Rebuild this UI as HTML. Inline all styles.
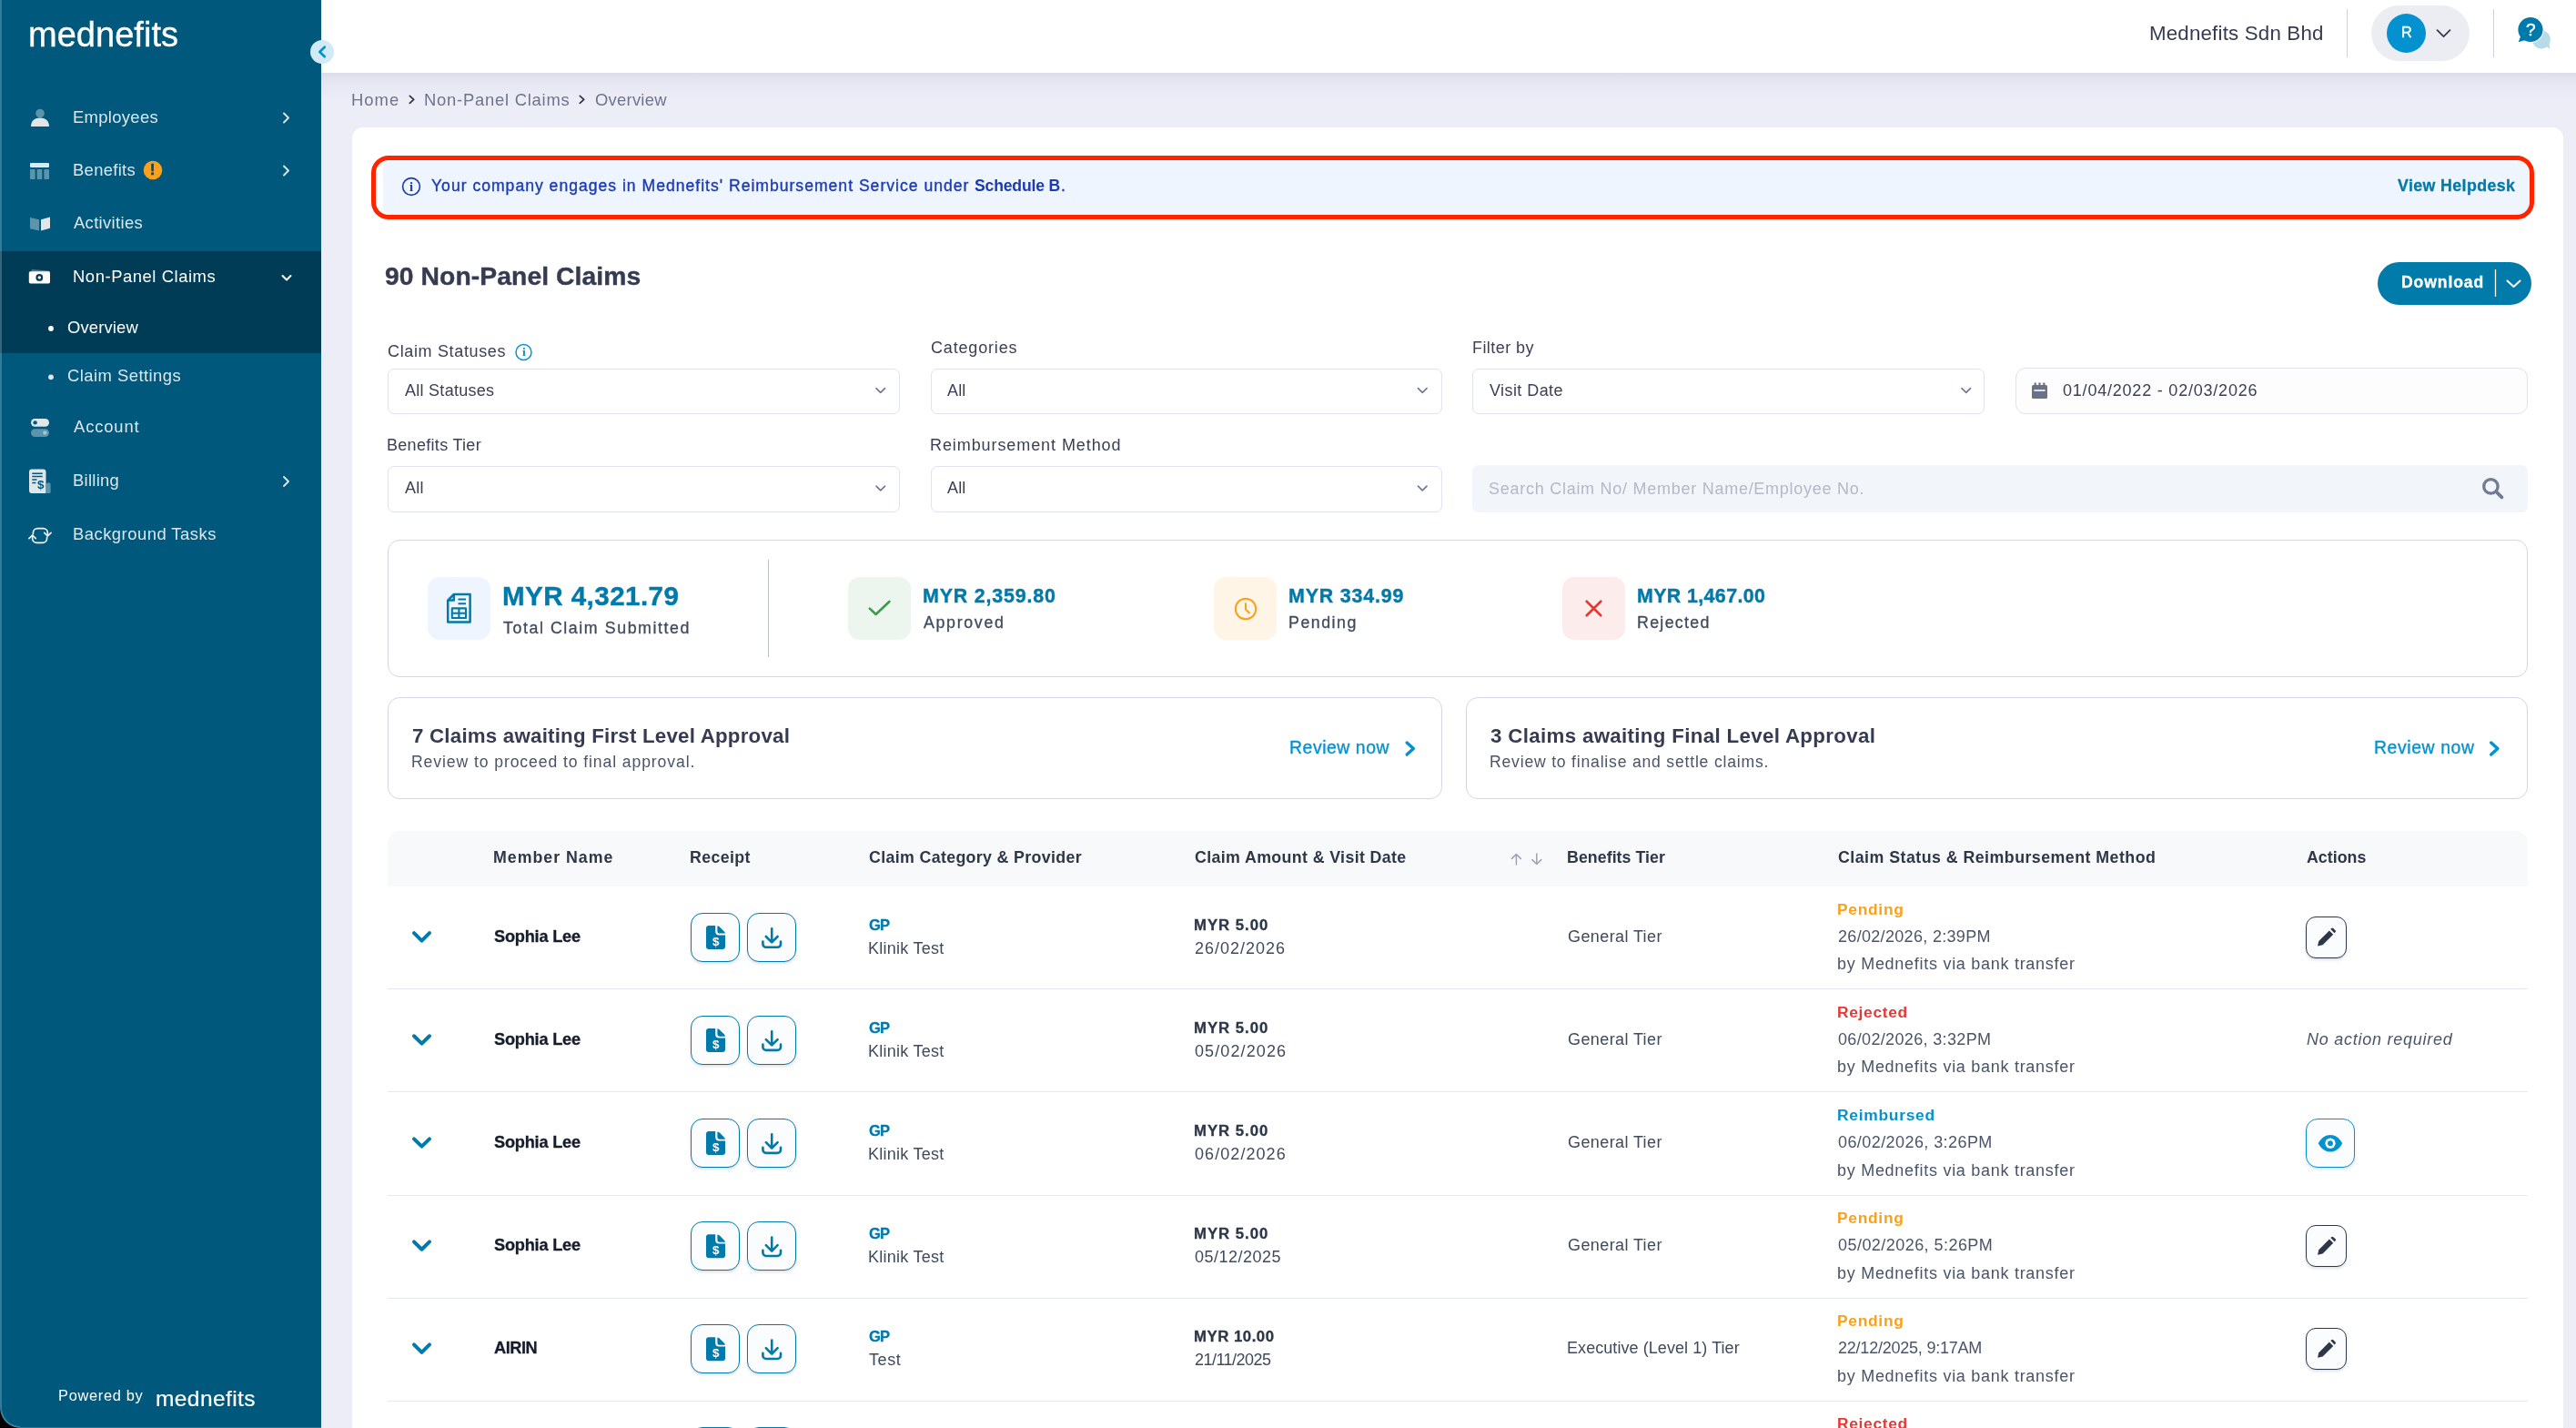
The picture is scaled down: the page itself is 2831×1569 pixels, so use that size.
<!DOCTYPE html>
<html lang="en"><head><meta charset="utf-8"><title>Non-Panel Claims - Overview</title>
<style>
*{box-sizing:border-box;margin:0;padding:0}
html,body{width:2831px;height:1569px;overflow:hidden}
body{position:relative;background:#ecedf7;font-family:"Liberation Sans",sans-serif;}
.t{position:absolute;white-space:nowrap;line-height:1;font-family:"Liberation Sans",sans-serif;will-change:transform}
.abs{position:absolute}
svg.ov{position:absolute;left:0;top:0;width:2831px;height:1569px;overflow:visible;pointer-events:none}
aside{position:absolute;left:0;top:0;width:353px;height:1569px;background:#00587c;}
aside .active{position:absolute;left:0;top:276px;width:353px;height:111.5px;background:#003c55}
aside .edge{position:absolute;left:0;top:0;width:2px;height:1569px;background:rgba(255,255,255,.21)}
header{position:absolute;left:0;top:0;width:2831px;height:80px;background:#fff}
.hshadow{position:absolute;left:353px;top:80px;width:2478px;height:30px;background:linear-gradient(#dcdde9,#e6e7f2 40%,#ecedf7)}
.vdiv{position:absolute;top:10px;width:1px;height:52.5px;background:#cfd1e0}
.pill{position:absolute;left:2606px;top:6px;width:108px;height:61px;border-radius:31px;background:#ecedf2}
.avatar{position:absolute;left:2623px;top:15px;width:43px;height:43px;border-radius:50%;background:#0392cf}
main{position:absolute;left:387px;top:139.5px;width:2430px;height:1440px;background:#fff;border-radius:12px}
.hl{position:absolute;left:407.5px;top:170.5px;width:2377.5px;height:70px;border:5px solid #ff2400;border-radius:19px;}
.alert{position:absolute;left:421px;top:176px;width:2360px;height:59.5px;background:#eef5ff;border-radius:9px 14px 14px 9px}
.btn-dl{position:absolute;left:2613px;top:288px;width:169px;height:46.5px;border-radius:24px;background:#007baa}
.sel{position:absolute;height:49.5px;border:1.2px solid #e0e2ef;border-radius:7px;background:#fff}
.date{position:absolute;left:2215px;top:404px;width:563px;height:51px;border:1.2px solid #e0e2ef;border-radius:11px;background:#fdfdfe}
.search{position:absolute;left:1618px;top:511px;width:1160px;height:51.5px;border-radius:7px;background:#f2f5f9}
.box{position:absolute;border:1.2px solid #d4d6e6;border-radius:13px;background:#fff}
.ib{position:absolute;top:634px;width:69px;height:69px;border-radius:13px}
.sdiv{position:absolute;left:844px;top:615px;width:1.3px;height:107px;background:#b9bdcb}
.thead{position:absolute;left:426px;top:913px;width:2352px;height:61px;background:#f8f9fb;border-radius:13px 13px 0 0}
.rline{position:absolute;left:426px;width:2352px;height:1px;background:#e6e8f1}
.rb{position:absolute;width:53.5px;height:53.5px;border:1.6px solid #0079ab;border-radius:13px;background:#fafcfe;box-shadow:0 2px 3px rgba(30,50,80,.14)}
.eb{position:absolute;left:2534px;width:44.75px;height:46px;border:1.6px solid #2d3748;border-radius:11px;background:#fbfcfe;box-shadow:0 2px 3px rgba(30,50,80,.14)}
.yb{position:absolute;left:2534px;width:53.5px;height:53.5px;border:1.6px solid #0392cf;border-radius:13px;background:#fafcfe;box-shadow:0 2px 3px rgba(30,50,80,.14)}
.gl{position:absolute;line-height:1;white-space:nowrap;font-weight:700;will-change:transform}
</style></head><body>
<div class="hshadow"></div>
<header>
<div class="vdiv" style="left:2579px"></div><div class="pill"></div><div class="avatar"></div><div class="vdiv" style="left:2740px"></div>
<span class="t" style="left:2362.00px;top:26.00px;font-size:22.3px;color:#363b52;letter-spacing:0.187px;">Mednefits Sdn Bhd</span>
<span class="t" style="left:2639.00px;top:27.00px;font-size:16.3px;color:#ffffff;-webkit-text-stroke:0.4px currentColor;">R</span>
</header>
<aside>
<div class="active"></div><div class="edge"></div>
<svg class="ov"><circle cx="44" cy="124.6" r="4.8" fill="rgba(255,255,255,.36)"/><path d="M34 139c0-7 4.5-9.6 10-9.6s10 2.6 10 9.6z" fill="#dfe7eb"/><polyline points="312,124.5 317,129.5 312,134.5" fill="none" stroke="#dbe7ed" stroke-width="1.9" stroke-linecap="round" stroke-linejoin="round"/><rect x="33" y="179" width="21" height="5" rx="1" fill="#dfe7eb"/><rect x="33" y="186" width="5.6" height="11" rx=".8" fill="rgba(255,255,255,.36)"/><rect x="40.7" y="186" width="5.6" height="11" rx=".8" fill="rgba(255,255,255,.36)"/><rect x="48.4" y="186" width="5.6" height="11" rx=".8" fill="rgba(255,255,255,.36)"/><polyline points="312,182.5 317,187.5 312,192.5" fill="none" stroke="#dbe7ed" stroke-width="1.9" stroke-linecap="round" stroke-linejoin="round"/><path d="M33 239l10 2.2v12.3l-10-2.2z" fill="rgba(255,255,255,.36)"/><path d="M45 241.2l10-2.7v12.3l-10 2.7z" fill="#dfe7eb"/><rect x="34" y="296.600" width="20.500" height="13" rx="1.500" fill="rgba(255,255,255,.3)" transform="rotate(5 44 303)"/><rect x="31.8" y="298.2" width="23.2" height="13.2" rx="1.6" fill="#fff"/><circle cx="43.3" cy="304.9" r="3.9" fill="#003c55"/><circle cx="43.3" cy="304.9" r="1.7" fill="#fff"/><polyline points="310.5,303 315,307.5 319.5,303" fill="none" stroke="#fff" stroke-width="2" stroke-linecap="round" stroke-linejoin="round"/><circle cx="56" cy="361" r="2.9" fill="#fff"/><circle cx="56" cy="414.3" r="2.9" fill="#dbe7ed"/><rect x="34" y="460" width="20" height="8.7" rx="4.35" fill="#dfe7eb"/><circle cx="38.6" cy="464.35" r="2.2" fill="#00587c"/><rect x="34" y="471.2" width="20" height="8.7" rx="4.35" fill="rgba(255,255,255,.36)"/><circle cx="49.4" cy="475.55" r="2.2" fill="rgba(255,255,255,.45)"/><rect x="51" y="530.5" width="4.6" height="11.5" rx="1.5" fill="rgba(255,255,255,.36)"/><path d="M35 515.5h12.5a3 3 0 0 1 3 3V542H35a3 3 0 0 1-3-3v-20.5a3 3 0 0 1 3-3z" fill="#dfe7eb"/><path d="M35.3 520.3h11.4M35.3 523.6h11.4M35.3 527h5.2M35.3 530.4h4" stroke="#00587c" stroke-width="1.5"/><g fill="none" stroke="#eef3f6" stroke-width="1.7" stroke-linecap="round" stroke-linejoin="round"><path d="M36.4 586.6v-1.200a4.800 4.800 0 0 1 4.800-4.800h6.400a4.800 4.800 0 0 1 4.800 4.800v3.200"/><path d="M48.700 585.300l3.700 3.700 3.700-3.700"/><path d="M51.600 590.400v1.200a4.800 4.800 0 0 1-4.800 4.800h-6.400a4.800 4.800 0 0 1-4.800-4.800v-3.200"/><path d="M39.300 591.700l-3.700-3.700-3.700 3.700"/></g><polyline points="312,524 317,529 312,534" fill="none" stroke="#dbe7ed" stroke-width="1.9" stroke-linecap="round" stroke-linejoin="round"/><circle cx="168" cy="187" r="10.3" fill="#f9a11b"/></svg>
<nav>
<span class="t" style="left:31.00px;top:19.00px;font-size:38px;color:#ffffff;letter-spacing:0.032px;-webkit-text-stroke:0.35px currentColor;">mednefits</span>
<span class="t" style="left:79.50px;top:120.00px;font-size:18.4px;color:#dbe7ed;letter-spacing:0.340px;">Employees</span>
<span class="t" style="left:79.50px;top:178.00px;font-size:18.4px;color:#dbe7ed;letter-spacing:0.321px;">Benefits</span>
<span class="t" style="left:80.50px;top:236.00px;font-size:18.4px;color:#dbe7ed;letter-spacing:0.349px;">Activities</span>
<span class="t" style="left:79.50px;top:295.00px;font-size:18.4px;color:#ffffff;letter-spacing:0.566px;">Non-Panel Claims</span>
<span class="t" style="left:73.50px;top:351.00px;font-size:18.4px;color:#ffffff;letter-spacing:0.163px;">Overview</span>
<span class="t" style="left:73.50px;top:404.00px;font-size:18.4px;color:#dbe7ed;letter-spacing:0.472px;">Claim Settings</span>
<span class="t" style="left:80.50px;top:460.00px;font-size:18.4px;color:#dbe7ed;letter-spacing:0.860px;">Account</span>
<span class="t" style="left:79.50px;top:519.00px;font-size:18.4px;color:#dbe7ed;letter-spacing:0.277px;">Billing</span>
<span class="t" style="left:79.50px;top:578.00px;font-size:18.4px;color:#dbe7ed;letter-spacing:0.495px;">Background Tasks</span>
<span class="t" style="left:64.00px;top:1525.00px;font-size:16.4px;color:#ffffff;letter-spacing:0.693px;">Powered by</span>
<span class="t" style="left:170.70px;top:1525.00px;font-size:24.5px;color:#ffffff;letter-spacing:0.416px;-webkit-text-stroke:0.2px currentColor;">mednefits</span>
<span class="gl" style="left:165.3px;top:179.4px;font-size:16px;color:#1d4257;-webkit-text-stroke:.6px #1d4257">!</span>
<span class="gl" style="left:40.6px;top:525.6px;font-size:13.5px;color:#00587c">$</span>
</nav>
</aside>
<nav class="crumb"><span class="t" style="left:386.00px;top:101.00px;font-size:18.4px;color:#6e7489;letter-spacing:1.057px;">Home</span>
<span class="t" style="left:465.50px;top:101.00px;font-size:18.4px;color:#6e7489;letter-spacing:0.766px;">Non-Panel Claims</span>
<span class="t" style="left:653.80px;top:101.00px;font-size:18.4px;color:#6e7489;letter-spacing:0.263px;">Overview</span></nav>
<main></main>
<section class="content">
<div class="alert"></div><div class="hl"></div>
<span class="t" style="left:474.00px;top:196.00px;font-size:17.6px;color:#1b3bb5;letter-spacing:0.992px;-webkit-text-stroke:0.35px currentColor;">Your company engages in Mednefits' Reimbursement Service under</span>
<span class="t" style="left:1070.50px;top:196.00px;font-size:17.6px;color:#1b3bb5;letter-spacing:-0.178px;font-weight:700;">Schedule B</span>
<span class="t" style="left:1165.50px;top:196.00px;font-size:17.6px;color:#1b3bb5;-webkit-text-stroke:0.35px currentColor;">.</span>
<span class="t" style="left:2635.00px;top:196.00px;font-size:17.8px;color:#0079ab;letter-spacing:0.391px;font-weight:700;-webkit-text-stroke:0.3px currentColor;">View Helpdesk</span>
<div class="btn-dl"></div>
<span class="t" style="left:422.50px;top:289.00px;font-size:28.3px;color:#363b52;letter-spacing:0.073px;font-weight:700;-webkit-text-stroke:0.4px currentColor;">90 Non-Panel Claims</span>
<span class="t" style="left:2638.50px;top:302.00px;font-size:17.6px;color:#ffffff;letter-spacing:0.885px;font-weight:700;-webkit-text-stroke:0.3px currentColor;">Download</span>
<div class="sel" style="left:426px;top:405px;width:563px;height:49.5px"></div><div class="sel" style="left:1022.5px;top:405px;width:562px;height:49.5px"></div><div class="sel" style="left:1618px;top:405px;width:563px;height:49.5px"></div><div class="date"></div>
<div class="sel" style="left:426px;top:512px;width:563px;height:51px"></div><div class="sel" style="left:1022.5px;top:512px;width:562px;height:51px"></div><div class="search"></div>
<span class="t" style="left:426.00px;top:377.00px;font-size:18px;color:#3a3f55;letter-spacing:0.651px;">Claim Statuses</span>
<span class="t" style="left:1022.50px;top:373.00px;font-size:18px;color:#3a3f55;letter-spacing:0.828px;">Categories</span>
<span class="t" style="left:1617.50px;top:373.00px;font-size:18px;color:#3a3f55;letter-spacing:0.436px;">Filter by</span>
<span class="t" style="left:425.00px;top:480.00px;font-size:18px;color:#3a3f55;letter-spacing:0.302px;">Benefits Tier</span>
<span class="t" style="left:1021.50px;top:480.00px;font-size:18px;color:#3a3f55;letter-spacing:0.917px;">Reimbursement Method</span>
<span class="t" style="left:444.50px;top:420.00px;font-size:18px;color:#3a3f55;letter-spacing:0.269px;">All Statuses</span>
<span class="t" style="left:1040.75px;top:420.00px;font-size:18px;color:#3a3f55;letter-spacing:0.123px;">All</span>
<span class="t" style="left:1637.00px;top:420.00px;font-size:18px;color:#3a3f55;letter-spacing:0.423px;">Visit Date</span>
<span class="t" style="left:2266.50px;top:420.00px;font-size:18px;color:#3a3f55;letter-spacing:0.788px;">01/04/2022 - 02/03/2026</span>
<span class="t" style="left:444.50px;top:527.00px;font-size:18px;color:#3a3f55;letter-spacing:0.248px;">All</span>
<span class="t" style="left:1040.75px;top:527.00px;font-size:18px;color:#3a3f55;letter-spacing:0.123px;">All</span>
<span class="t" style="left:1636.00px;top:528.00px;font-size:18px;color:#b4b8c9;letter-spacing:0.734px;">Search Claim No/ Member Name/Employee No.</span>
<div class="box" style="left:426px;top:593px;width:2352px;height:151px"></div>
<div class="ib" style="left:470px;background:#eef5fe"></div><div class="ib" style="left:932px;background:#edf6ee"></div><div class="ib" style="left:1334px;background:#fff5e6"></div><div class="ib" style="left:1717px;background:#fdecec"></div>
<div class="sdiv"></div>
<span class="t" style="left:552.00px;top:640.00px;font-size:29.6px;color:#0079ab;letter-spacing:0.434px;font-weight:700;-webkit-text-stroke:0.4px currentColor;">MYR 4,321.79</span>
<span class="t" style="left:553.00px;top:682.00px;font-size:17.8px;color:#3f4a5c;letter-spacing:1.572px;-webkit-text-stroke:0.3px currentColor;">Total Claim Submitted</span>
<span class="t" style="left:1014.00px;top:645.00px;font-size:21.4px;color:#0079ab;letter-spacing:0.832px;font-weight:700;-webkit-text-stroke:0.4px currentColor;">MYR 2,359.80</span>
<span class="t" style="left:1015.00px;top:676.00px;font-size:17.8px;color:#3f4a5c;letter-spacing:1.682px;-webkit-text-stroke:0.3px currentColor;">Approved</span>
<span class="t" style="left:1416.00px;top:645.00px;font-size:21.4px;color:#0079ab;letter-spacing:0.833px;font-weight:700;-webkit-text-stroke:0.4px currentColor;">MYR 334.99</span>
<span class="t" style="left:1416.00px;top:676.00px;font-size:17.8px;color:#3f4a5c;letter-spacing:1.522px;-webkit-text-stroke:0.3px currentColor;">Pending</span>
<span class="t" style="left:1798.50px;top:645.00px;font-size:21.4px;color:#0079ab;letter-spacing:0.378px;font-weight:700;-webkit-text-stroke:0.4px currentColor;">MYR 1,467.00</span>
<span class="t" style="left:1798.50px;top:676.00px;font-size:17.8px;color:#3f4a5c;letter-spacing:1.316px;-webkit-text-stroke:0.3px currentColor;">Rejected</span>
<div class="box" style="left:426px;top:766px;width:1158.5px;height:112px"></div>
<div class="box" style="left:1611px;top:766px;width:1167px;height:112px"></div>
<span class="t" style="left:453.00px;top:798.00px;font-size:22.3px;color:#363b52;letter-spacing:0.217px;font-weight:700;">7 Claims awaiting First Level Approval</span>
<span class="t" style="left:452.00px;top:829.00px;font-size:17.6px;color:#4a5468;letter-spacing:0.905px;">Review to proceed to final approval.</span>
<span class="t" style="left:1416.50px;top:812.00px;font-size:19.4px;color:#0392cf;letter-spacing:0.552px;-webkit-text-stroke:0.35px currentColor;">Review now</span>
<span class="t" style="left:1638.00px;top:798.00px;font-size:22.3px;color:#363b52;letter-spacing:0.333px;font-weight:700;">3 Claims awaiting Final Level Approval</span>
<span class="t" style="left:1637.00px;top:829.00px;font-size:17.6px;color:#4a5468;letter-spacing:0.797px;">Review to finalise and settle claims.</span>
<span class="t" style="left:2609.00px;top:812.00px;font-size:19.4px;color:#0392cf;letter-spacing:0.607px;-webkit-text-stroke:0.35px currentColor;">Review now</span>
<div class="thead"></div>
<span class="t" style="left:541.50px;top:934.00px;font-size:17.8px;color:#2d3748;letter-spacing:0.984px;font-weight:700;">Member Name</span>
<span class="t" style="left:758.00px;top:934.00px;font-size:17.8px;color:#2d3748;letter-spacing:0.365px;font-weight:700;">Receipt</span>
<span class="t" style="left:955.00px;top:934.00px;font-size:17.8px;color:#2d3748;letter-spacing:0.349px;font-weight:700;">Claim Category &amp; Provider</span>
<span class="t" style="left:1313.00px;top:934.00px;font-size:17.8px;color:#2d3748;letter-spacing:0.372px;font-weight:700;">Claim Amount &amp; Visit Date</span>
<span class="t" style="left:1722.00px;top:934.00px;font-size:17.8px;color:#2d3748;letter-spacing:0.045px;font-weight:700;">Benefits Tier</span>
<span class="t" style="left:2019.50px;top:934.00px;font-size:17.8px;color:#2d3748;letter-spacing:0.468px;font-weight:700;">Claim Status &amp; Reimbursement Method</span>
<span class="t" style="left:2534.50px;top:934.00px;font-size:17.8px;color:#2d3748;letter-spacing:0.031px;font-weight:700;">Actions</span>
<svg class="ov"><circle cx="354" cy="57" r="13" fill="#d2eaf6"/><polyline points="356.8,51.7 351.3,57 356.8,62.3" fill="none" stroke="#0392cf" stroke-width="2.6" stroke-linecap="round" stroke-linejoin="round"/><polyline points="450.3,105.4 454.7,109.4 450.3,113.4" fill="none" stroke="#2e3348" stroke-width="1.7" stroke-linecap="round" stroke-linejoin="round"/><polyline points="637.3,105.4 641.6999999999999,109.4 637.3,113.4" fill="none" stroke="#2e3348" stroke-width="1.7" stroke-linecap="round" stroke-linejoin="round"/><polyline points="2678.5,33.2 2685.5,40.2 2692.5,33.2" fill="none" stroke="#363b52" stroke-width="1.8" stroke-linecap="round" stroke-linejoin="round"/><path d="M2793 33.5a9.8 9.8 0 1 1-2.5 19.3l.2 0a9.8 9.8 0 0 1 2.3-19.3z" fill="#b8dbea"/><circle cx="2792.6" cy="43.6" r="9.9" fill="#b8dbea"/><path d="M2797 50l5.6 4-1.4-7z" fill="#b8dbea"/><circle cx="2781" cy="32.500" r="14.600" fill="#fff"/><circle cx="2781" cy="32.5" r="13.6" fill="#0079ab"/><path d="M2770.5 39l-2.8 7.2 8.6-2.4z" fill="#0079ab"/><circle cx="452" cy="205" r="9.4" fill="none" stroke="#1b3bb5" stroke-width="1.6"/><circle cx="575.5" cy="387" r="8.5" fill="none" stroke="#0392cf" stroke-width="1.5"/><line x1="2742.5" y1="296" x2="2742.5" y2="326" stroke="#fff" stroke-width="1.3"/><polyline points="2755.5,308.5 2762.5,315 2769.5,308.5" fill="none" stroke="#fff" stroke-width="2" stroke-linecap="round" stroke-linejoin="round"/><polyline points="962.95,426.6 967.75,431.4 972.55,426.6" fill="none" stroke="#6f768d" stroke-width="1.6" stroke-linecap="round" stroke-linejoin="round"/><polyline points="1558.45,426.6 1563.25,431.4 1568.05,426.6" fill="none" stroke="#6f768d" stroke-width="1.6" stroke-linecap="round" stroke-linejoin="round"/><polyline points="2155.95,426.6 2160.75,431.4 2165.55,426.6" fill="none" stroke="#6f768d" stroke-width="1.6" stroke-linecap="round" stroke-linejoin="round"/><polyline points="962.95,534.1 967.75,538.9 972.55,534.1" fill="none" stroke="#6f768d" stroke-width="1.6" stroke-linecap="round" stroke-linejoin="round"/><polyline points="1558.45,534.1 1563.25,538.9 1568.05,534.1" fill="none" stroke="#6f768d" stroke-width="1.6" stroke-linecap="round" stroke-linejoin="round"/><g fill="#6b7186"><rect x="2233" y="423" width="17" height="15" rx="1.6"/><rect x="2235.6" y="420.5" width="2.2" height="3.5"/><rect x="2240.4" y="420.5" width="2.2" height="3.5"/><rect x="2245.2" y="420.5" width="2.2" height="3.5"/></g><rect x="2235.4" y="428.2" width="12.2" height="1.6" fill="#fdfdfe"/><circle cx="2737.4" cy="534.4" r="7.7" fill="none" stroke="#737a94" stroke-width="3.3"/><line x1="2743.4" y1="540.4" x2="2749.4" y2="546.4" stroke="#737a94" stroke-width="3.8" stroke-linecap="round"/><g fill="none" stroke="#0079ab" stroke-width="2.5" stroke-linejoin="round"><path d="M498.8 653H516.6V683.6H492.2V659.6z"/><path d="M498.8 653v6.6h-6.6"/><path d="M503.5 658.6h8.5M503.5 663.2h8.5" stroke-width="2"/><rect x="496.8" y="668.4" width="15.2" height="10.6" stroke-width="2.1"/><path d="M504.4 668.4v10.6M496.8 673.7h15.2" stroke-width="2.1"/></g><polyline points="955.8,668.6 962.6,675 977.4,661" fill="none" stroke="#3d9a4c" stroke-width="2.6" stroke-linecap="round" stroke-linejoin="round"/><circle cx="1369" cy="669" r="11.2" fill="none" stroke="#f9a11b" stroke-width="2"/><path d="M1369 663.2V669.6L1373 673.4" fill="none" stroke="#f9a11b" stroke-width="2" stroke-linecap="round" stroke-linejoin="round"/><path d="M1743.7 660.7l15.6 15.6M1759.3 660.7l-15.6 15.6" stroke="#e53935" stroke-width="2.7" stroke-linecap="round"/><polyline points="1546.2,816 1553.4,822.5 1546.2,829" fill="none" stroke="#0392cf" stroke-width="3.4" stroke-linecap="round" stroke-linejoin="round"/><polyline points="2737.7,816 2744.8999999999996,822.5 2737.7,829" fill="none" stroke="#0392cf" stroke-width="3.4" stroke-linecap="round" stroke-linejoin="round"/><g fill="none" stroke="#9aa3b3" stroke-width="1.5" stroke-linecap="round" stroke-linejoin="round"><path d="M1666.4 950V938.5M1661.5 943.4l4.9-4.9 4.9 4.9"/><path d="M1688.8 938v11.5M1683.9 944.6l4.9 4.9 4.9-4.9"/></g></svg>
<span class="gl" style="left:2776.1px;top:22.8px;font-size:19px;color:#fff;font-weight:400;-webkit-text-stroke:.5px #fff">?</span>
<span class="gl" style="left:449.9px;top:197.6px;font-size:14.5px;color:#1b3bb5;font-family:'Liberation Serif',serif">i</span>
<span class="gl" style="left:573.6px;top:380.2px;font-size:13.5px;color:#0392cf;font-family:'Liberation Serif',serif">i</span>
<div class="row">
<div class="rb" style="left:759px;top:1003.0px"></div><div class="rb" style="left:821px;top:1003.0px"></div>
<div class="eb" style="top:1007.0px"></div>
<svg class="ov"><polyline points="455,1025.2 463.5,1033.6 472,1025.2" fill="none" stroke="#0079ab" stroke-width="4" stroke-linecap="round" stroke-linejoin="round"/><path d="M779 1017.0h7.2v6.4a4 4 0 0 0 4 4H797v12.6a3 3 0 0 1-3 3h-15a3 3 0 0 1-3-3v-20a3 3 0 0 1 3-3z" fill="#0079ab"/><path d="M788.4 1017.3c1.2.2 1.9.6 2.7 1.4l4.6 4.6c.8.8 1.2 1.5 1.3 2.3h-6a2.6 2.6 0 0 1-2.6-2.6z" fill="#0079ab"/><g fill="none" stroke="#0079ab" stroke-width="2.6" stroke-linecap="round" stroke-linejoin="round"><path d="M848.2 1020.3V1035.0M841.8 1029.0l6.4 6.4 6.4-6.4"/><path d="M838.4 1034.6v2.6a3.6 3.6 0 0 0 3.6 3.6h12.4a3.6 3.6 0 0 0 3.6-3.6v-2.6"/></g><path d="M2547 1039.6l1.3-5.6 11.6-11.6 4.3 4.3-11.6 11.6z" fill="#2d3748"/><path d="M2561.3 1020.9l.9-.9a1.5 1.5 0 0 1 2.1 0l2.2 2.2a1.5 1.5 0 0 1 0 2.1l-.9.9z" fill="#2d3748"/></svg>
<span class="gl" style="left:782.6px;top:1028.2px;font-size:13.5px;color:#fff">$</span>
<div class="rline" style="top:1086px"></div>
<span class="t" style="left:2018.50px;top:991.00px;font-size:17.4px;color:#f9a11b;letter-spacing:0.713px;font-weight:700;">Pending</span>
<span class="t" style="left:542.50px;top:1020.00px;font-size:18.2px;color:#151c2b;letter-spacing:-0.212px;font-weight:700;-webkit-text-stroke:0.3px currentColor;">Sophia Lee</span>
<span class="t" style="left:955.00px;top:1009.00px;font-size:16.6px;color:#0079ab;letter-spacing:-0.907px;font-weight:700;-webkit-text-stroke:0.3px currentColor;">GP</span>
<span class="t" style="left:954.00px;top:1033.00px;font-size:18px;color:#3f4a5c;letter-spacing:0.247px;">Klinik Test</span>
<span class="t" style="left:1312.00px;top:1009.00px;font-size:16.8px;color:#2d3748;letter-spacing:0.960px;font-weight:700;-webkit-text-stroke:0.3px currentColor;">MYR 5.00</span>
<span class="t" style="left:1313.00px;top:1033.00px;font-size:18px;color:#3f4a5c;letter-spacing:0.991px;">26/02/2026</span>
<span class="t" style="left:1723.00px;top:1020.00px;font-size:18px;color:#3f4a5c;letter-spacing:0.398px;">General Tier</span>
<span class="t" style="left:2019.50px;top:1020.00px;font-size:18px;color:#4a5468;letter-spacing:0.316px;">26/02/2026, 2:39PM</span>
<span class="t" style="left:2018.50px;top:1050.00px;font-size:18px;color:#4a5468;letter-spacing:0.720px;">by Mednefits via bank transfer</span>
</div><div class="row">
<div class="rb" style="left:759px;top:1116.05px"></div><div class="rb" style="left:821px;top:1116.05px"></div>
<svg class="ov"><polyline points="455,1138.25 463.5,1146.6499999999999 472,1138.25" fill="none" stroke="#0079ab" stroke-width="4" stroke-linecap="round" stroke-linejoin="round"/><path d="M779 1130.05h7.2v6.4a4 4 0 0 0 4 4H797v12.6a3 3 0 0 1-3 3h-15a3 3 0 0 1-3-3v-20a3 3 0 0 1 3-3z" fill="#0079ab"/><path d="M788.4 1130.35c1.2.2 1.9.6 2.7 1.4l4.6 4.6c.8.8 1.2 1.5 1.3 2.3h-6a2.6 2.6 0 0 1-2.6-2.6z" fill="#0079ab"/><g fill="none" stroke="#0079ab" stroke-width="2.6" stroke-linecap="round" stroke-linejoin="round"><path d="M848.2 1133.35V1148.05M841.8 1142.05l6.4 6.4 6.4-6.4"/><path d="M838.4 1147.6499999999999v2.6a3.6 3.6 0 0 0 3.6 3.6h12.4a3.6 3.6 0 0 0 3.6-3.6v-2.6"/></g></svg>
<span class="gl" style="left:782.6px;top:1141.25px;font-size:13.5px;color:#fff">$</span>
<div class="rline" style="top:1199px"></div>
<span class="t" style="left:2018.50px;top:1104.00px;font-size:17.4px;color:#e53935;letter-spacing:0.662px;font-weight:700;">Rejected</span>
<span class="t" style="left:542.50px;top:1133.00px;font-size:18.2px;color:#151c2b;letter-spacing:-0.212px;font-weight:700;-webkit-text-stroke:0.3px currentColor;">Sophia Lee</span>
<span class="t" style="left:955.00px;top:1122.00px;font-size:16.6px;color:#0079ab;letter-spacing:-0.907px;font-weight:700;-webkit-text-stroke:0.3px currentColor;">GP</span>
<span class="t" style="left:954.00px;top:1146.00px;font-size:18px;color:#3f4a5c;letter-spacing:0.247px;">Klinik Test</span>
<span class="t" style="left:1312.00px;top:1122.00px;font-size:16.8px;color:#2d3748;letter-spacing:0.960px;font-weight:700;-webkit-text-stroke:0.3px currentColor;">MYR 5.00</span>
<span class="t" style="left:1313.00px;top:1146.00px;font-size:18px;color:#3f4a5c;letter-spacing:1.103px;">05/02/2026</span>
<span class="t" style="left:1723.00px;top:1133.00px;font-size:18px;color:#3f4a5c;letter-spacing:0.398px;">General Tier</span>
<span class="t" style="left:2019.50px;top:1133.00px;font-size:18px;color:#4a5468;letter-spacing:0.345px;">06/02/2026, 3:32PM</span>
<span class="t" style="left:2018.50px;top:1163.00px;font-size:18px;color:#4a5468;letter-spacing:0.720px;">by Mednefits via bank transfer</span>
<span class="t" style="left:2535.00px;top:1133.00px;font-size:18px;color:#4a5468;letter-spacing:0.746px;font-style:italic;">No action required</span>
</div><div class="row">
<div class="rb" style="left:759px;top:1229.1px"></div><div class="rb" style="left:821px;top:1229.1px"></div>
<div class="yb" style="top:1229.1px"></div>
<svg class="ov"><polyline points="455,1251.3 463.5,1259.6999999999998 472,1251.3" fill="none" stroke="#0079ab" stroke-width="4" stroke-linecap="round" stroke-linejoin="round"/><path d="M779 1243.1h7.2v6.4a4 4 0 0 0 4 4H797v12.6a3 3 0 0 1-3 3h-15a3 3 0 0 1-3-3v-20a3 3 0 0 1 3-3z" fill="#0079ab"/><path d="M788.4 1243.3999999999999c1.2.2 1.9.6 2.7 1.4l4.6 4.6c.8.8 1.2 1.5 1.3 2.3h-6a2.6 2.6 0 0 1-2.6-2.6z" fill="#0079ab"/><g fill="none" stroke="#0079ab" stroke-width="2.6" stroke-linecap="round" stroke-linejoin="round"><path d="M848.2 1246.3999999999999V1261.1M841.8 1255.1l6.4 6.4 6.4-6.4"/><path d="M838.4 1260.6999999999998v2.6a3.6 3.6 0 0 0 3.6 3.6h12.4a3.6 3.6 0 0 0 3.6-3.6v-2.6"/></g><path d="M2547.8 1256.2c3.4-6.4 8-9.3 13.2-9.3s9.800 2.900 13.200 9.300c-3.400 6.400-8 9.300-13.200 9.300s-9.800-2.900-13.200-9.300z" fill="#0392cf"/><circle cx="2561" cy="1256.2" r="5.6" fill="#fff"/><circle cx="2561" cy="1256.2" r="2.9" fill="#0392cf"/></svg>
<span class="gl" style="left:782.6px;top:1254.3px;font-size:13.5px;color:#fff">$</span>
<div class="rline" style="top:1313px"></div>
<span class="t" style="left:2018.50px;top:1217.00px;font-size:17.4px;color:#0392cf;letter-spacing:0.735px;font-weight:700;">Reimbursed</span>
<span class="t" style="left:542.50px;top:1246.00px;font-size:18.2px;color:#151c2b;letter-spacing:-0.212px;font-weight:700;-webkit-text-stroke:0.3px currentColor;">Sophia Lee</span>
<span class="t" style="left:955.00px;top:1235.00px;font-size:16.6px;color:#0079ab;letter-spacing:-0.907px;font-weight:700;-webkit-text-stroke:0.3px currentColor;">GP</span>
<span class="t" style="left:954.00px;top:1259.00px;font-size:18px;color:#3f4a5c;letter-spacing:0.247px;">Klinik Test</span>
<span class="t" style="left:1312.00px;top:1235.00px;font-size:16.8px;color:#2d3748;letter-spacing:0.960px;font-weight:700;-webkit-text-stroke:0.3px currentColor;">MYR 5.00</span>
<span class="t" style="left:1313.00px;top:1259.00px;font-size:18px;color:#3f4a5c;letter-spacing:1.069px;">06/02/2026</span>
<span class="t" style="left:1723.00px;top:1246.00px;font-size:18px;color:#3f4a5c;letter-spacing:0.398px;">General Tier</span>
<span class="t" style="left:2019.50px;top:1246.00px;font-size:18px;color:#4a5468;letter-spacing:0.422px;">06/02/2026, 3:26PM</span>
<span class="t" style="left:2018.50px;top:1277.00px;font-size:18px;color:#4a5468;letter-spacing:0.720px;">by Mednefits via bank transfer</span>
</div><div class="row">
<div class="rb" style="left:759px;top:1342.15px"></div><div class="rb" style="left:821px;top:1342.15px"></div>
<div class="eb" style="top:1346.15px"></div>
<svg class="ov"><polyline points="455,1364.35 463.5,1372.75 472,1364.35" fill="none" stroke="#0079ab" stroke-width="4" stroke-linecap="round" stroke-linejoin="round"/><path d="M779 1356.15h7.2v6.4a4 4 0 0 0 4 4H797v12.6a3 3 0 0 1-3 3h-15a3 3 0 0 1-3-3v-20a3 3 0 0 1 3-3z" fill="#0079ab"/><path d="M788.4 1356.4499999999998c1.2.2 1.9.6 2.7 1.4l4.6 4.6c.8.8 1.2 1.5 1.3 2.3h-6a2.6 2.6 0 0 1-2.6-2.6z" fill="#0079ab"/><g fill="none" stroke="#0079ab" stroke-width="2.6" stroke-linecap="round" stroke-linejoin="round"><path d="M848.2 1359.4499999999998V1374.15M841.8 1368.15l6.4 6.4 6.4-6.4"/><path d="M838.4 1373.75v2.6a3.6 3.6 0 0 0 3.6 3.6h12.4a3.6 3.6 0 0 0 3.6-3.6v-2.6"/></g><path d="M2547 1378.75l1.3-5.6 11.6-11.6 4.3 4.3-11.6 11.6z" fill="#2d3748"/><path d="M2561.3 1360.05l.9-.9a1.5 1.5 0 0 1 2.1 0l2.2 2.2a1.5 1.5 0 0 1 0 2.1l-.9.9z" fill="#2d3748"/></svg>
<span class="gl" style="left:782.6px;top:1367.35px;font-size:13.5px;color:#fff">$</span>
<div class="rline" style="top:1426px"></div>
<span class="t" style="left:2018.50px;top:1330.00px;font-size:17.4px;color:#f9a11b;letter-spacing:0.713px;font-weight:700;">Pending</span>
<span class="t" style="left:542.50px;top:1359.00px;font-size:18.2px;color:#151c2b;letter-spacing:-0.212px;font-weight:700;-webkit-text-stroke:0.3px currentColor;">Sophia Lee</span>
<span class="t" style="left:955.00px;top:1348.00px;font-size:16.6px;color:#0079ab;letter-spacing:-0.907px;font-weight:700;-webkit-text-stroke:0.3px currentColor;">GP</span>
<span class="t" style="left:954.00px;top:1372.00px;font-size:18px;color:#3f4a5c;letter-spacing:0.247px;">Klinik Test</span>
<span class="t" style="left:1312.00px;top:1348.00px;font-size:16.8px;color:#2d3748;letter-spacing:0.960px;font-weight:700;-webkit-text-stroke:0.3px currentColor;">MYR 5.00</span>
<span class="t" style="left:1313.00px;top:1372.00px;font-size:18px;color:#3f4a5c;letter-spacing:0.503px;">05/12/2025</span>
<span class="t" style="left:1723.00px;top:1359.00px;font-size:18px;color:#3f4a5c;letter-spacing:0.398px;">General Tier</span>
<span class="t" style="left:2019.50px;top:1359.00px;font-size:18px;color:#4a5468;letter-spacing:0.451px;">05/02/2026, 5:26PM</span>
<span class="t" style="left:2018.50px;top:1390.00px;font-size:18px;color:#4a5468;letter-spacing:0.720px;">by Mednefits via bank transfer</span>
</div><div class="row">
<div class="rb" style="left:759px;top:1455.2px"></div><div class="rb" style="left:821px;top:1455.2px"></div>
<div class="eb" style="top:1459.2px"></div>
<svg class="ov"><polyline points="455,1477.4 463.5,1485.8 472,1477.4" fill="none" stroke="#0079ab" stroke-width="4" stroke-linecap="round" stroke-linejoin="round"/><path d="M779 1469.2h7.2v6.4a4 4 0 0 0 4 4H797v12.6a3 3 0 0 1-3 3h-15a3 3 0 0 1-3-3v-20a3 3 0 0 1 3-3z" fill="#0079ab"/><path d="M788.4 1469.5c1.2.2 1.9.6 2.7 1.4l4.6 4.6c.8.8 1.2 1.5 1.3 2.3h-6a2.6 2.6 0 0 1-2.6-2.6z" fill="#0079ab"/><g fill="none" stroke="#0079ab" stroke-width="2.6" stroke-linecap="round" stroke-linejoin="round"><path d="M848.2 1472.5V1487.2M841.8 1481.2l6.4 6.4 6.4-6.4"/><path d="M838.4 1486.8v2.6a3.6 3.6 0 0 0 3.6 3.6h12.4a3.6 3.6 0 0 0 3.6-3.6v-2.6"/></g><path d="M2547 1491.8l1.3-5.6 11.6-11.6 4.3 4.3-11.6 11.6z" fill="#2d3748"/><path d="M2561.3 1473.1l.9-.9a1.5 1.5 0 0 1 2.1 0l2.2 2.2a1.5 1.5 0 0 1 0 2.1l-.9.9z" fill="#2d3748"/></svg>
<span class="gl" style="left:782.6px;top:1480.4px;font-size:13.5px;color:#fff">$</span>
<div class="rline" style="top:1539px"></div>
<span class="t" style="left:2018.50px;top:1443.00px;font-size:17.4px;color:#f9a11b;letter-spacing:0.713px;font-weight:700;">Pending</span>
<span class="t" style="left:542.50px;top:1472.00px;font-size:18.2px;color:#151c2b;letter-spacing:-0.469px;font-weight:700;-webkit-text-stroke:0.3px currentColor;">AIRIN</span>
<span class="t" style="left:955.00px;top:1461.00px;font-size:16.6px;color:#0079ab;letter-spacing:-0.907px;font-weight:700;-webkit-text-stroke:0.3px currentColor;">GP</span>
<span class="t" style="left:955.00px;top:1485.00px;font-size:18px;color:#3f4a5c;letter-spacing:0.563px;">Test</span>
<span class="t" style="left:1312.00px;top:1461.00px;font-size:16.8px;color:#2d3748;letter-spacing:0.511px;font-weight:700;-webkit-text-stroke:0.3px currentColor;">MYR 10.00</span>
<span class="t" style="left:1313.00px;top:1485.00px;font-size:18px;color:#3f4a5c;letter-spacing:-0.538px;">21/11/2025</span>
<span class="t" style="left:1722.00px;top:1472.00px;font-size:18px;color:#3f4a5c;letter-spacing:0.069px;">Executive (Level 1) Tier</span>
<span class="t" style="left:2019.50px;top:1472.00px;font-size:18px;color:#4a5468;letter-spacing:-0.225px;">22/12/2025, 9:17AM</span>
<span class="t" style="left:2018.50px;top:1503.00px;font-size:18px;color:#4a5468;letter-spacing:0.720px;">by Mednefits via bank transfer</span>
</div><div class="row">
<div class="rb" style="left:759px;top:1568.25px"></div><div class="rb" style="left:821px;top:1568.25px"></div>
<span class="t" style="left:2018.50px;top:1556.00px;font-size:17.4px;color:#e53935;letter-spacing:0.662px;font-weight:700;">Rejected</span>
</div>
</section>
<div class="abs" style="left:0;top:1567.5px;width:353px;height:1.5px;background:#2f7797"></div><div class="abs" style="left:0;top:1547px;width:22px;height:22px;background:radial-gradient(circle at 22px 0,rgba(0,0,0,0) 19.6px,#3a7f9d 20.2px,#3a7f9d 21.4px,#000 22.2px)"></div>
</body></html>
